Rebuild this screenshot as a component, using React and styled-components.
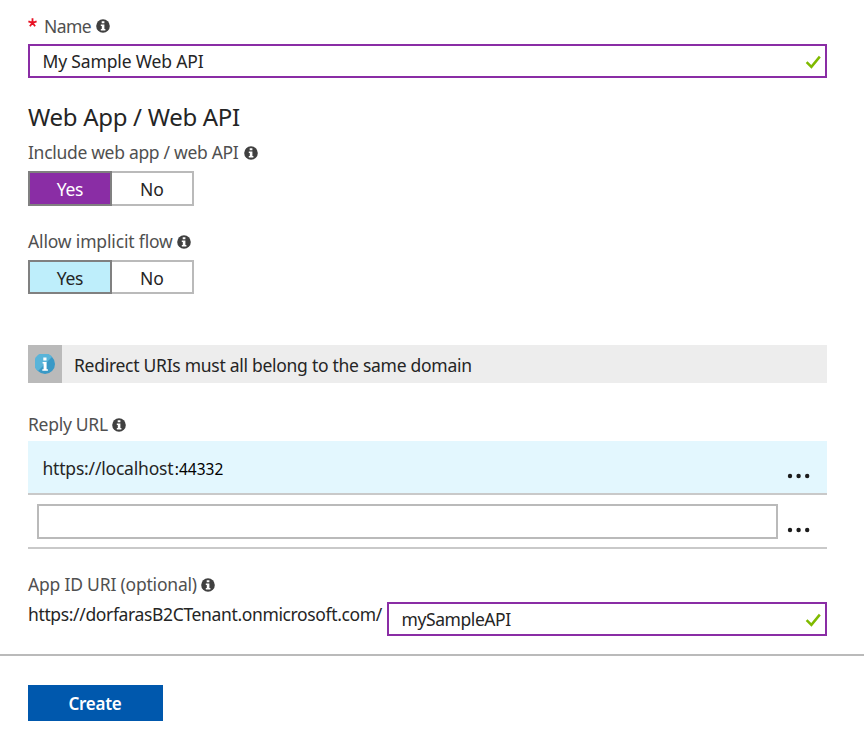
import React from "react";
import styled, { createGlobalStyle } from "styled-components";

const GlobalStyle = createGlobalStyle`
  * { box-sizing: border-box; }
  body {
    margin: 0;
    background: #fff;
    color: #252525;
    font-family: "Noto Sans", "Open Sans", sans-serif;
    font-size: 17.5px;
    line-height: 24px;
  }
`;

const Page = styled.main`
  width: 864px;
  height: 746px;
  overflow: hidden;
  background: #fff;
`;

const Form = styled.form`
  display: flex;
  flex-direction: column;
  height: 654px;
  padding: 14px 37px 0 28px;
`;

const Text = styled.span`
  white-space: pre;
  letter-spacing: ${(p) => p.$tracking || 0}px;
`;

const Label = styled.div`
  display: flex;
  align-items: center;
  flex: none;
  height: 24px;
  margin-top: ${(p) => p.$top || 0}px;
  margin-bottom: ${(p) => p.$bottom || 0}px;
  color: #505050;
`;

const LabelText = styled(Text)`
  width: ${(p) => p.$width}px;
  margin-top: ${(p) => (p.$required ? 0 : -2)}px;
`;

const Required = styled.svg`
  flex: none;
  width: 9px;
  height: 9px;
  margin: -7px 7px 0 0;
`;

const InfoGlyph = styled.svg`
  flex: none;
  width: 14px;
  height: 14px;
  margin-left: 4px;
  margin-bottom: 0.6px;
`;

const Field = styled.div`
  display: flex;
  align-items: center;
  justify-content: space-between;
  flex: none;
  height: 34px;
  width: ${(p) => p.$width || 799}px;
  border: 2px solid #8a2da5;
  padding: 0 3px 1px 12.5px;
  background: #fff;
`;

const Check = styled.svg`
  width: 17px;
  height: 14px;
  margin-top: 2px;
`;

const Heading = styled.h2`
  flex: none;
  margin: 23px 0 8px;
  height: 32px;
  font-size: 24px;
  font-weight: 400;
  line-height: 32px;
`;

const Toggle = styled.div`
  display: flex;
  flex: none;
  width: 166px;
  height: ${(p) => p.$height}px;
`;

const Option = styled.div`
  display: flex;
  align-items: center;
  justify-content: center;
  padding-top: 1px;
  width: 82px;
  border: 2px solid #bababa;
  border-left: 0;
  background: #fff;
`;

const SelectedOption = styled(Option)`
  width: 84px;
  border: 2px solid #808080;
  color: ${(p) => (p.$accent ? "#fff" : "#252525")};
  background: ${(p) => (p.$accent ? "#8a2da5" : "#beeefb")};
`;

const Notice = styled.div`
  display: flex;
  align-items: center;
  flex: none;
  height: 38px;
  margin-top: 51px;
  background: #ededed;
`;

const NoticeText = styled(Text)`
  padding-top: 1px;
`;

const NoticeIcon = styled.div`
  display: flex;
  align-items: center;
  justify-content: center;
  width: 34px;
  height: 38px;
  margin-right: 12px;
  background: #bababa;
`;

const UrlRow = styled.div`
  display: flex;
  align-items: center;
  justify-content: space-between;
  flex: none;
  height: 54px;
  padding: 0 16px 0 ${(p) => (p.$filled ? 14.5 : 9)}px;
  border-bottom: 2px solid #c9c9c9;
  background: ${(p) => (p.$filled ? "#e3f7fe" : "#fff")};
`;

const Url = styled.div`
  display: flex;
  align-items: baseline;
  margin-top: 3px;
`;

const Port = styled(Text)`
  font-size: 15.5px;
  color: #000;
  margin-left: 1.5px;
`;

const EmptyInput = styled.div`
  width: 741px;
  height: 35px;
  border: 2px solid #bababa;
  background: #fff;
`;

const Dots = styled.svg`
  width: 24px;
  height: 6px;
  margin-top: 18px;
`;

const UriRow = styled.div`
  display: flex;
  align-items: flex-start;
  justify-content: space-between;
  flex: none;
  padding-top: 5px;
`;

const Prefix = styled(Text)`
  width: 356px;
`;

const Footer = styled.footer`
  height: 92px;
  padding: 29px 28px 0;
  border-top: 2px solid #bababa;
`;

const CreateButton = styled.button`
  display: flex;
  align-items: center;
  justify-content: center;
  width: 135px;
  height: 36px;
  padding: 1px 1px 0 0;
  border: 0;
  background: #0058ad;
  color: #fff;
  font: 600 17px/24px "Noto Sans", "Open Sans", sans-serif;
`;

const Info = () => (
  <InfoGlyph viewBox="0 0 14 14">
    <circle cx="7" cy="7" r="6.8" fill="#404040" />
    <path d="M5.7 2.2h2.7v2.1H5.7zM4.8 5.5h3.6v4.6h1v1.5H4.8v-1.5h1V7h-1z" fill="#fff" />
  </InfoGlyph>
);

const Valid = () => (
  <Check viewBox="0 0 17 14">
    <path d="M1.6 7.2l4.8 4.6L14.8 1.6" fill="none" stroke="#7fba00" strokeWidth="2.5" />
  </Check>
);

const More = () => (
  <Dots viewBox="0 0 24 6">
    <circle cx="3" cy="3" r="2.2" fill="#1c1c1c" />
    <circle cx="11.6" cy="3" r="2.2" fill="#1c1c1c" />
    <circle cx="20.2" cy="3" r="2.2" fill="#1c1c1c" />
  </Dots>
);

const YesNo = ({ accent, height }) => (
  <Toggle $height={height}>
    <SelectedOption $accent={accent}><Text $tracking={-0.3}>Yes</Text></SelectedOption>
    <Option><Text>No</Text></Option>
  </Toggle>
);

export default function App() {
  return (
    <>
      <GlobalStyle />
      <Page>
        <Form>
          <Label $bottom={6}>
            <Required viewBox="0 0 9 9">
              <path d="M4.5 4.8V.2M4.5 4.8L.4 3.4M4.5 4.8L8.6 3.4M4.5 4.8L1.9 8.3M4.5 4.8L7.1 8.3" stroke="#e81123" strokeWidth="1.8" />
            </Required>
            <LabelText $required $width={48} $tracking={-0.6}>Name</LabelText>
            <Info />
          </Label>
          <Field>
            <Text $tracking={-0.16}>My Sample Web API</Text>
            <Valid />
          </Field>

          <Heading><Text $tracking={-0.3}>Web App / Web API</Text></Heading>
          <Label $bottom={6}>
            <LabelText $width={212} $tracking={-0.31}>Include web app / web API</LabelText>
            <Info />
          </Label>
          <YesNo accent height={35} />
          <Label $top={24} $bottom={6}>
            <LabelText $width={145} $tracking={-0.16}>Allow implicit flow</LabelText>
            <Info />
          </Label>
          <YesNo height={34} />

          <Notice>
            <NoticeIcon>
              <svg width="20" height="20" viewBox="0 0 20 20">
                <circle cx="10" cy="10" r="10" fill="#3999c6" />
                <path d="M3 17A10 10 0 1 1 17 3z" fill="#59b4d9" />
                <path d="M8.3 3.5h3.2v3H8.3zM7.6 8h4v7.2h1.3v1.5H7.3v-1.5h1.3V9.4h-1z" fill="#fff" />
              </svg>
            </NoticeIcon>
            <NoticeText $tracking={-0.28}>Redirect URIs must all belong to the same domain</NoticeText>
          </Notice>

          <Label $top={30} $bottom={4}>
            <LabelText $width={80} $tracking={-0.28}>Reply URL</LabelText>
            <Info />
          </Label>
          <UrlRow $filled>
            <Url>
              <Text $tracking={-0.2}>https://localhost</Text>
              <Port>:44332</Port>
            </Url>
            <More />
          </UrlRow>
          <UrlRow>
            <EmptyInput />
            <More />
          </UrlRow>

          <Label $top={24}>
            <LabelText $width={169} $tracking={-0.2}>App ID URI (optional)</LabelText>
            <Info />
          </Label>
          <UriRow>
            <Prefix $tracking={-0.36}>https://dorfarasB2CTenant.onmicrosoft.com/</Prefix>
            <Field $width={440}>
              <Text $tracking={-0.42}>mySampleAPI</Text>
              <Valid />
            </Field>
          </UriRow>
        </Form>
        <Footer>
          <CreateButton type="button"><Text $tracking={-0.3}>Create</Text></CreateButton>
        </Footer>
      </Page>
    </>
  );
}
